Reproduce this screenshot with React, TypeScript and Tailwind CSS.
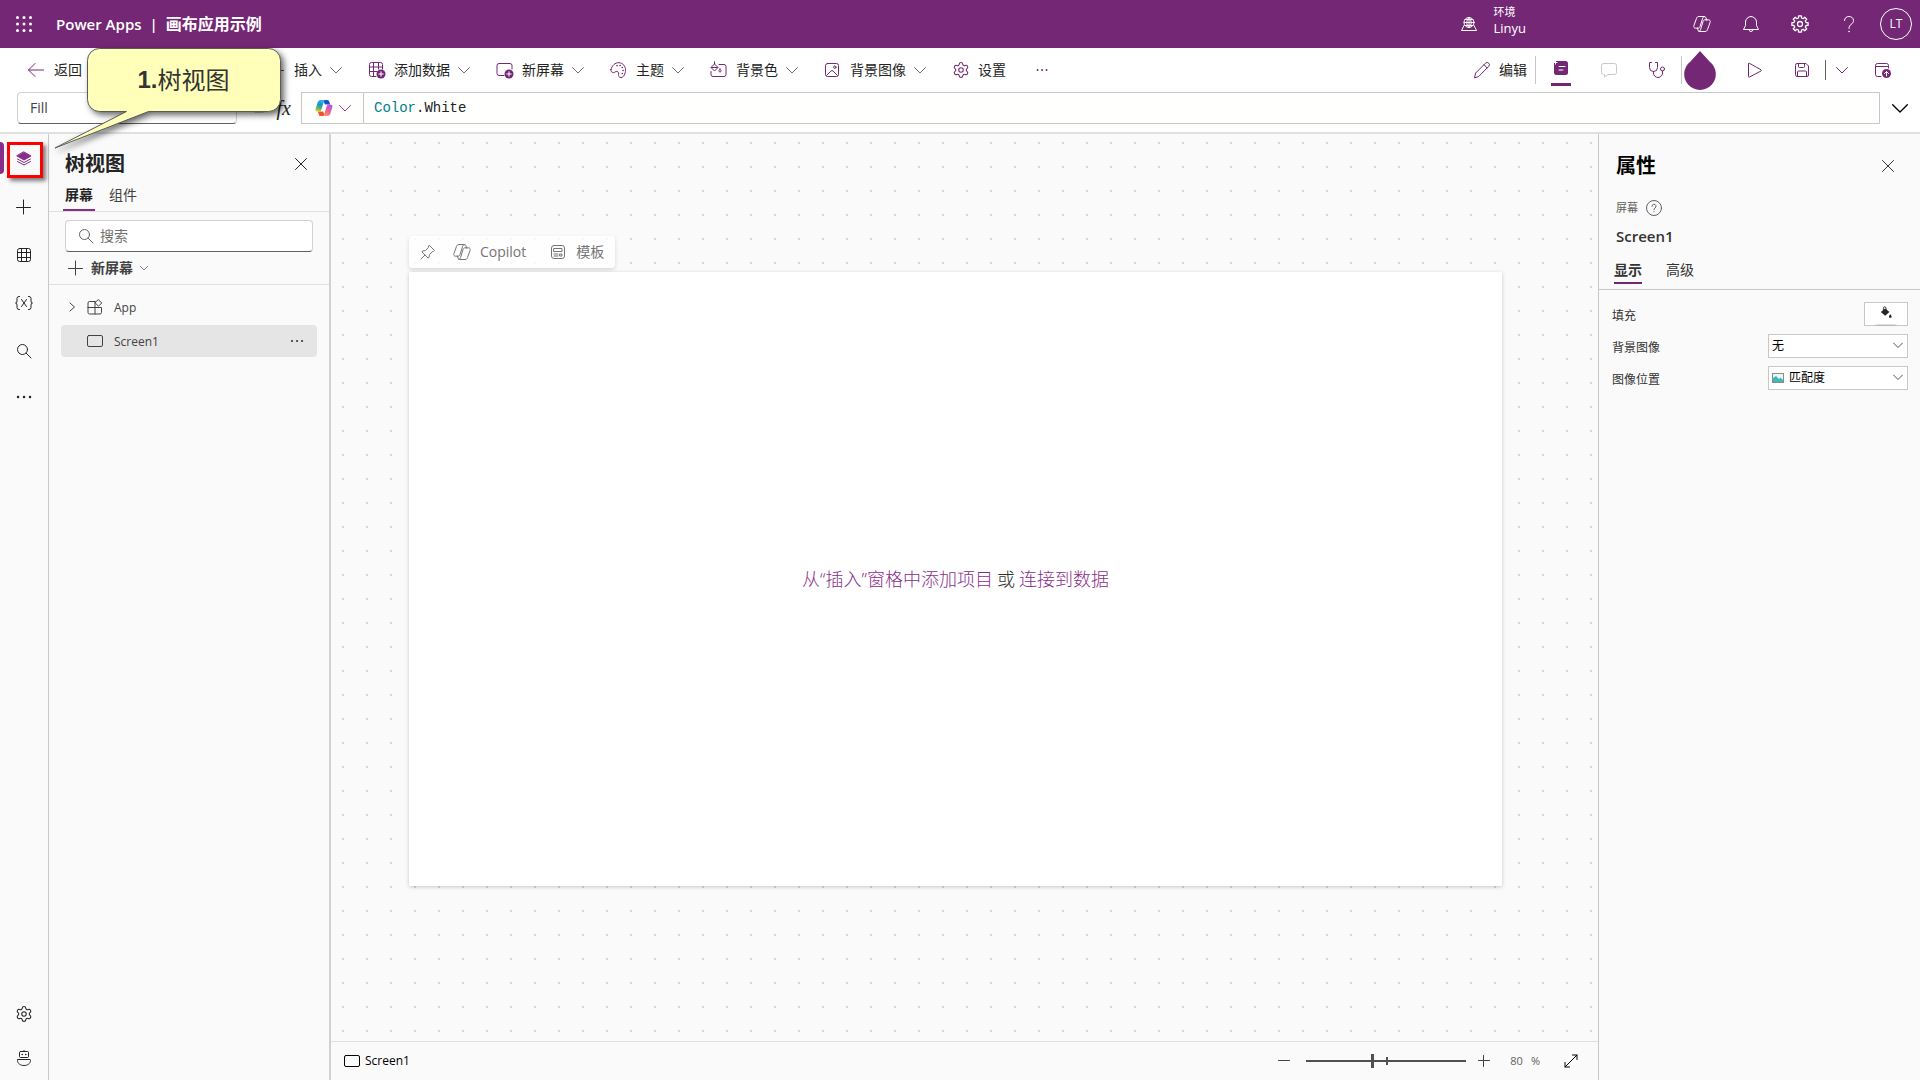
import { useId, useState, type ReactNode } from "react";
import { Settings } from "lucide-react";
import clsx from "clsx";

interface IconProps {
  children: ReactNode;
  className?: string;
  box?: string;
}

function Icon({ children, className = "size-5", box = "0 0 20 20" }: IconProps) {
  return (
    <svg
      viewBox={box}
      className={clsx("shrink-0", className)}
      fill="none"
      stroke="currentColor"
      strokeWidth={1}
      strokeLinecap="round"
      strokeLinejoin="round"
      aria-hidden="true"
    >
      {children}
    </svg>
  );
}

const ChevronDown = ({ className = "w-3 h-3" }: { className?: string }) => (
  <Icon className={className} box="0 0 12 12">
    <path d="M.5 3.5 6 9l5.5-5.5" />
  </Icon>
);

const CloseIcon = () => (
  <Icon className="size-3" box="0 0 12 12">
    <path d="m.5.5 11 11m0-11-11 11" />
  </Icon>
);

const PlusIcon = () => (
  <Icon className="size-4" box="0 0 16 16">
    <path d="M7.5 1v14M.5 8.5h14" />
  </Icon>
);

const SearchIcon = ({ className = "size-4" }: { className?: string }) => (
  <Icon className={className} box="0 0 16 16">
    <circle cx="6.5" cy="6.5" r="5" />
    <path d="m10.2 10.2 4.8 4.8" />
  </Icon>
);

const GridIcon = () => (
  <Icon className="size-4" box="0 0 16 16">
    <rect x="1.5" y="1.5" width="13" height="13" rx="2" />
    <path d="M5.5 1.5v13m5-13v13m-9-9h13m-13 5h13" />
  </Icon>
);

const CopilotOutline = () => (
  <Icon>
    <path d="M6.8 2.5h5.4c1 0 1.5.5 1.8 1.4l.7 2.3M6.8 2.5c-1.2 0-1.9.7-2.3 1.9L1.9 11.6c-.5 1.5.2 2.6 1.7 2.6h2.3M13.2 17.5H7.8c-1 0-1.5-.5-1.8-1.4l-.6-2M13.2 17.5c1.2 0 1.9-.7 2.3-1.9l2.6-7.2c.5-1.5-.2-2.6-1.7-2.6h-2.3" />
    <path d="M12.5 2.6c-1 .1-1.6.8-1.9 1.8L8 12.7c-.4 1-1 1.5-2 1.5M14.5 5.8H13c-1 0-1.6.6-1.9 1.5l-2.6 8.400c-.3 1-.8 1.600-1.600 1.700" />
  </Icon>
);

// Outline of a gear with eight teeth, centred on 10,10
const gearPath =
  Array.from({ length: 8 })
    .flatMap((_, i) =>
      [
        [-14, 6.2],
        [-10, 8.2],
        [10, 8.2],
        [14, 6.2],
      ].map(([offset, r]) => {
        const a = ((i * 45 + offset) * Math.PI) / 180;
        return `${(10 + r * Math.sin(a)).toFixed(2)} ${(10 - r * Math.cos(a)).toFixed(2)}`;
      }),
    )
    .reduce((d, p) => (d ? `${d}L${p}` : `M${p}`), "") + "Z";

function CopilotColor() {
  const id = useId();
  return (
    <svg viewBox="0 0 20 20" className="size-[18px]" aria-hidden="true">
      <defs>
        <linearGradient id={`${id}a`} x1=".5" y1="0" x2=".3" y2="1">
          <stop offset="0" stopColor="#2bb5ee" />
          <stop offset=".4" stopColor="#1f8fd6" />
          <stop offset=".7" stopColor="#52b85c" />
          <stop offset="1" stopColor="#e6d02a" />
        </linearGradient>
        <linearGradient id={`${id}b`} x1=".8" y1="0" x2=".2" y2="1">
          <stop offset="0" stopColor="#a65cf0" />
          <stop offset=".5" stopColor="#ee5a9a" />
          <stop offset="1" stopColor="#ff9a5c" />
        </linearGradient>
      </defs>
      <path d="M9 1h4.500c1.400 0 2 .8 2.300 1.900L16.800 6H11z" fill="#1c4fc4" />
      <path d="M11 19H6.500c-1.400 0-2-.8-2.300-1.900L3.200 14H9z" fill="#f0522e" />
      <path
        d="M6.500 1h4.800c-1 .5-1.300 1.300-1.700 2.500l-2.500 8.500c-.4 1.400-1.200 2-2.500 2H3.200C1 14 .2 12.700.7 11L3 3.500C3.600 1.800 4.800 1 6.500 1Z"
        fill={`url(#${id}a)`}
      />
      <path
        d="M13.500 19H8.700c1-.5 1.300-1.300 1.700-2.500L12.900 8c.4-1.400 1.200-2 2.500-2h1.400c2.200 0 3 1.300 2.500 3L17 16.500c-.6 1.700-1.800 2.500-3.500 2.500Z"
        fill={`url(#${id}b)`}
      />
      <path d="M11.200 6.500 8.800 13.500" stroke="#fff" strokeWidth="1.500" />
    </svg>
  );
}

const ScreenIcon = () => (
  <Icon className="w-4 h-4" box="0 0 16 16">
    <rect x=".5" y="2.5" width="15" height="11" rx="1.5" />
  </Icon>
);

const PlusBadge = () => (
  <>
    <circle cx="13" cy="13" r="4.5" fill="currentColor" stroke="none" />
    <path d="M13 10.800v4.400M10.800 13h4.400" stroke="#fff" />
  </>
);

interface Command {
  label: string;
  icon: ReactNode;
  menu: boolean;
}

const commands: Command[] = [
  { label: "插入", icon: <PlusIcon />, menu: true },
  {
    label: "添加数据",
    icon: (
      <Icon className="size-[18px]" box="0 0 18 18">
        <path d="M8 15.5H3.5a2 2 0 0 1-2-2v-10a2 2 0 0 1 2-2h9a2 2 0 0 1 2 2V8M1.5 6h13m-13 4.5H9M5.5 1.5v14m5-14V8" />
        <PlusBadge />
      </Icon>
    ),
    menu: true,
  },
  {
    label: "新屏幕",
    icon: (
      <Icon className="size-[18px]" box="0 0 18 18">
        <path d="M8 14.5H3a2 2 0 0 1-2-2v-8a2 2 0 0 1 2-2h11a2 2 0 0 1 2 2V8" />
        <PlusBadge />
      </Icon>
    ),
    menu: true,
  },
  {
    label: "主题",
    icon: (
      <Icon className="size-[18px]" box="0 0 18 18">
        <path d="M1 8.5C2 4.5 5 1.5 9 1.7c4 .3 6.600 3.600 6.500 7.500-.1 3.500-1.800 7.300-4.500 7.300-2.200 0-2.700-1.700-2.500-3.200.2-1.700-.3-2.700-1.600-2.900-1.500-.2-2 1.300-3.600 1.200C1.600 11.500.6 10.200 1 8.5Z" />
        <path d="M7 4.800h.1m3-.3h.1m2 2h.1m.7 3h.1m-.8 3h.1" strokeWidth="1.600" />
      </Icon>
    ),
    menu: true,
  },
  {
    label: "背景色",
    icon: (
      <Icon className="size-[18px]" box="0 0 18 18">
        <path d="M9 3.500h5a2 2 0 0 1 2 2v8a2 2 0 0 1-2 2H3a2 2 0 0 1-2-2V10.500" />
        <path d="M4.500 3 1 6.500l3.500 3.500L8 6.500 4.500 3V.8M1.500 6.500h6M10 8c-.8 1-1 1.500-1 2a1 1 0 0 0 2 0c0-.5-.3-1-1-2Z" />
      </Icon>
    ),
    menu: true,
  },
  {
    label: "背景图像",
    icon: (
      <Icon className="size-[18px]" box="0 0 18 18">
        <rect x="1.5" y="2.5" width="13" height="13" rx="2" />
        <circle cx="10.800" cy="6.200" r="1.200" />
        <path d="m2.500 14.500 4.500-4.500q1-1 2 0l4.500 4.500" />
      </Icon>
    ),
    menu: true,
  },
  { label: "设置", icon: <Settings className="size-[18px]" strokeWidth={1.4} />, menu: false },
];

function Header() {
  return (
    <header className="flex h-12 shrink-0 items-center bg-[#742774] pl-4 pr-2 text-white">
      <button aria-label="应用启动器" className="flex size-4 items-center justify-center">
        <svg viewBox="0 0 16 16" className="size-4" fill="currentColor">
          {[1.5, 8, 14.5].map((y) => [1.5, 8, 14.5].map((x) => <circle key={`${x}-${y}`} cx={x} cy={y} r="1.5" />))}
        </svg>
      </button>
      <h1 className="ml-6 flex items-center gap-2 text-[15px] font-semibold">
        <span>Power Apps</span>
        <span>|</span>
        <span className="text-base">画布应用示例</span>
      </h1>
      <div className="ml-auto flex items-center gap-4">
        <Icon className="size-4" box="0 0 16 16">
          <circle cx="8" cy="6.500" r="5" />
          <path d="M8 1.500v10m-5-5h10m-9-3h8m-8 6h8M8 1.500c-3 3-3 7 0 10 3-3 3-7 0-10M3 9.500.5 14.500h15L13 9.500" />
        </Icon>
        <div className="flex flex-col pb-2">
          <span className="text-[11px] leading-4">环境</span>
          <span className="text-[13px] leading-4">Linyu</span>
        </div>
      </div>
      <div className="ml-[166px] flex items-center gap-[29px]">
        <button aria-label="Copilot">
          <CopilotOutline />
        </button>
        <button aria-label="通知">
          <Icon>
            <path d="M10 2.500a5.500 5.500 0 0 0-5.500 5.500v3.500l-2 4h15l-2-4V8A5.500 5.500 0 0 0 10 2.500ZM8 15.500a2 2 0 0 0 4 0" />
          </Icon>
        </button>
        <button aria-label="设置">
          <Icon>
            <path d={gearPath} strokeWidth="1.300" />
            <circle cx="10" cy="10" r="2.500" strokeWidth="1.300" />
          </Icon>
        </button>
        <button aria-label="帮助">
          <Icon>
            <path d="M5.500 6.500c0-2.500 2-4 4.500-4s4.500 1.600 4.500 4c0 2-1.200 2.900-2.500 4-1.300 1-2 1.800-2 4" />
            <path d="M10 17.500h.1" strokeWidth="1.600" />
          </Icon>
        </button>
      </div>
      <button className="ml-[21px] flex size-8 items-center justify-center rounded-full border border-white text-xs">LT</button>
    </header>
  );
}

function CommandBar() {
  return (
    <div className="flex h-11 shrink-0 items-center bg-white pl-7 pr-7 text-sm text-[#242424]">
      <button className="mr-[186px] flex shrink-0 items-center gap-2">
        <Icon className="size-[18px] text-[#742774]" box="0 0 18 18">
          <path d="M15.500 9H.5m6.500-6.500L.5 9l6.500 6.500" />
        </Icon>
        返回
      </button>
      <div className="flex items-center gap-[26px] whitespace-nowrap">
        {commands.map((c) => (
          <button key={c.label} className="flex items-center gap-2">
            <span className="flex w-[18px] justify-center text-[#742774]">{c.icon}</span>
            {c.label}
            {c.menu && (
              <span className="text-[#707070]">
                <ChevronDown />
              </span>
            )}
          </button>
        ))}
        <button aria-label="更多" className="flex size-5 items-center justify-center text-[#742774]">
          <Icon className="size-3" box="0 0 12 12">
            <path d="M1.500 6h.1m4.400 0h.1m4.400 0h.1" strokeWidth="1.800" />
          </Icon>
        </button>
      </div>

      <div className="ml-auto flex items-center text-[#742774]">
        <button className="flex items-center gap-2">
          <Icon className="size-[18px]" box="0 0 18 18">
            <path d="m1.500 16.500 1.200-4.500L12.500 2.200a2.200 2.200 0 0 1 3.200 3.200L6 15.200ZM11 3.700 14.200 7" />
          </Icon>
          <span className="text-[#242424]">编辑</span>
        </button>
        <span className="mx-2 h-7 w-px bg-[#c8c8c8]" />
        <div className="ml-[7px] flex items-center gap-7">
          <button aria-label="注释" className="flex h-8 w-5 flex-col items-center border-b-3 border-[#742774] pt-[6px]">
            <svg viewBox="0 0 16 16" className="size-4">
              <rect x="1" y="1" width="14" height="14" rx="2.500" fill="currentColor" />
              <path d="M6 6.500h6m-6 3.500h4" stroke="#fff" strokeLinecap="round" />
              <path d="M2.500.5v4m-2-2h4" stroke="#fff" />
            </svg>
          </button>
          <button aria-label="批注" className="text-[#c8c8c8]">
            <Icon>
              <path d="M4.500 3.500h11a2 2 0 0 1 2 2v7a2 2 0 0 1-2 2H9L5.500 17.200v-2.700h-1a2 2 0 0 1-2-2v-7a2 2 0 0 1 2-2Z" />
            </Icon>
          </button>
          <button aria-label="应用检查器">
            <Icon>
              <path d="M4.500 2.500H2.500v5a4 4 0 0 0 8 0v-5h-2M6.500 11.500v1.500a4.500 4.500 0 0 0 9 0V11" />
              <circle cx="15.500" cy="9" r="2" />
            </Icon>
          </button>
        </div>
        <span className="ml-[14px] h-7 w-px bg-[#c8c8c8]" />
        <Icon className="ml-0.5 h-10 w-8" box="0 0 32 40">
          <path d="M16 1 25.500 11.500A15.800 15.800 0 1 1 6.500 11.500Z" fill="currentColor" stroke="none" />
        </Icon>
        <div className="ml-7 flex items-center gap-7">
          <button aria-label="预览">
            <Icon>
              <path d="M4.500 4v12.500q0 1 1 .5L17 11q.8-.6 0-1.200L5.500 3.300q-1-.5-1 .7Z" />
            </Icon>
          </button>
          <button aria-label="保存">
            <Icon>
              <path d="M3.500 5a1.500 1.500 0 0 1 1.500-1.500h9L16.500 6v9a1.500 1.500 0 0 1-1.500 1.500H5A1.500 1.500 0 0 1 3.500 15ZM6.500 3.500v3a1 1 0 0 0 1 1h4a1 1 0 0 0 1-1v-3M5.500 16.500V12a1 1 0 0 1 1-1h7a1 1 0 0 1 1 1v4.500" />
            </Icon>
          </button>
        </div>
        <span className="ml-[13px] h-5 w-px bg-[#616161]" />
        <button aria-label="保存选项" className="ml-[10px]">
          <ChevronDown />
        </button>
        <button aria-label="发布" className="ml-[26px]">
          <Icon className="size-[18px]" box="0 0 18 18">
            <path d="M7 15.500H3.500a2 2 0 0 1-2-2v-9a2 2 0 0 1 2-2h9a2 2 0 0 1 2 2V7M1.500 5.500h13" />
            <circle cx="12.500" cy="12.500" r="4.500" fill="currentColor" stroke="none" />
            <path d="M12.500 15v-4.500m-2 2 2-2 2 2" stroke="#fff" />
          </Icon>
        </button>
      </div>
    </div>
  );
}

function FormulaBar() {
  const [formula, setFormula] = useState("Color.White");
  const [head, ...rest] = formula.split(".");

  return (
    <div className="flex h-[42px] shrink-0 items-start border-b-2 border-[#e0e0e0] bg-white pl-[17px]">
      <select
        aria-label="属性"
        className="h-8 w-[220px] appearance-none rounded border border-[#d1d1d1] border-b-[#616161] bg-white px-3 text-sm text-[#424242]"
      >
        <option>Fill</option>
      </select>
      <span className="flex h-8 w-16 items-center justify-end gap-3 pr-[10px] text-[#242424]">
        <span className="pt-1 text-xl">=</span>
        <span className="font-['Liberation_Serif',serif] text-xl italic">fx</span>
      </span>
      <div className="flex h-8 flex-1 border border-[#c8c8c8] bg-[#fffffe]">
        <button aria-label="Copilot" className="flex w-[62px] items-center justify-center gap-[6px] border-r border-[#c8c8c8] text-[#9b3f9b]">
          <CopilotColor />
          <ChevronDown />
        </button>
        <div className="relative flex-1 font-['Liberation_Mono',monospace] text-sm">
          <div aria-hidden="true" className="px-[10px] leading-[30px] text-[#242424]">
            <span className="text-[#007f8b]">{head}</span>
            {rest.length > 0 && `.${rest.join(".")}`}
          </div>
          <input
            aria-label="公式"
            value={formula}
            onChange={(e) => setFormula(e.target.value)}
            className="absolute inset-0 w-full bg-transparent px-[10px] text-transparent caret-black outline-none"
          />
        </div>
      </div>
      <button aria-label="展开编辑栏" className="flex h-8 w-10 items-center justify-center text-black">
        <ChevronDown className="size-4" />
      </button>
    </div>
  );
}

function Rail() {
  const button = "flex h-12 w-full items-center justify-center";
  return (
    <nav className="flex w-[49px] shrink-0 flex-col border-r border-[#c8c8c8] pt-px pb-0.5 text-[#242424]">
      <button aria-label="树视图" className={clsx(button, "relative text-[#8a2d8a]")}>
        <span className="absolute top-[7px] left-0 h-8 w-1 rounded-r bg-[#8a2d8a]" />
        <Icon className="size-4" box="0 0 16 16">
          <path d="M8 1 15 5 8 9 1 5Z" fill="currentColor" />
          <path d="m1.500 8 6.500 3.500L14.500 8m-13 2.500L8 14l6.500-3.500" />
        </Icon>
        <span className="absolute top-[7px] left-[7px] size-9 border-3 border-[#ff0000] shadow-[3px_3px_4px_rgba(0,0,0,0.5)]" />
      </button>
      <button aria-label="插入" className={button}>
        <PlusIcon />
      </button>
      <button aria-label="数据" className={button}>
        <GridIcon />
      </button>
      <button aria-label="变量" className={button}>
        <Icon className="h-4 w-[18px]" box="0 0 18 16">
          <path d="M4.500 1.500H4a2 2 0 0 0-2 2V6q0 2-1.500 2Q2 8 2 10v2.500a2 2 0 0 0 2 2h.5m9-13h.5a2 2 0 0 1 2 2V6q0 2 1.500 2Q16 8 16 10v2.500a2 2 0 0 1-2 2h-.5M6.500 4.500l5 7m0-7-5 7" />
        </Icon>
      </button>
      <button aria-label="搜索" className={button}>
        <SearchIcon />
      </button>
      <button aria-label="更多" className="flex h-11 w-full items-center justify-center">
        <Icon className="size-4" box="0 0 16 16">
          <path d="M2 8h.1m5.900 0h.1m5.900 0h.1" strokeWidth="2.400" />
        </Icon>
      </button>
      <button aria-label="设置" className={clsx(button, "mt-auto")}>
        <Settings className="size-[18px]" strokeWidth={1.4} />
      </button>
      <button aria-label="虚拟代理" className="flex h-10 w-full items-center justify-center">
        <Icon className="size-4" box="0 0 16 16">
          <path d="M8 .5v1" />
          <rect x="3.500" y="1.500" width="9" height="6" rx="1" />
          <path d="M6.200 4.500h.1m3.400 0h.1" strokeWidth="1.600" />
          <path d="M2 9.500h12q.5 0 .5 1c0 3-3 5-6.500 5s-6.500-2-6.500-5q0-1 .5-1Z" />
        </Icon>
      </button>
    </nav>
  );
}

function TreePanel() {
  return (
    <aside className="flex w-[282px] shrink-0 flex-col border-r-2 border-[#d1d1d1] text-[#242424]">
      <div className="flex h-[46px] items-end justify-between pr-[22px] pl-4">
        <h2 className="text-xl leading-8 font-bold">树视图</h2>
        <button aria-label="关闭" className="flex h-8 items-center">
          <CloseIcon />
        </button>
      </div>
      <div role="tablist" className="flex h-8 border-b border-[#e0e0e0] pl-[14px] text-sm">
        <button role="tab" aria-selected="true" className="w-8 border-b-2 border-[#8a2d8a] font-semibold">
          屏幕
        </button>
        <button role="tab" aria-selected="false" className="ml-[14px] border-b-2 border-transparent text-[#424242]">
          组件
        </button>
      </div>
      <label className="mx-4 mt-2 flex h-8 items-center gap-[6px] rounded border border-[#d1d1d1] border-b-[#616161] bg-white px-3 text-[#616161]">
        <SearchIcon />
        <input aria-label="搜索" placeholder="搜索" className="min-w-0 flex-1 text-sm outline-none placeholder:text-[#707070]" />
      </label>
      <div className="flex h-[33px] items-center border-b border-[#e0e0e0] pl-[19px]">
        <button className="flex items-center gap-[7px] text-sm font-semibold text-[#424242]">
          <PlusIcon />
          新屏幕
          <ChevronDown className="size-2" />
        </button>
      </div>
      <ul className="flex flex-col gap-0.5 py-[6px] pr-3 pl-3 text-xs text-[#424242]">
        <li className="flex h-8 items-center rounded pl-[6px]">
          <Icon className="mr-2 size-3" box="0 0 12 12">
            <path d="m3 2 4.500 4L3 10" />
          </Icon>
          <Icon className="size-4" box="0 0 16 16">
            <path d="M8 2.500H2.500a1.500 1.500 0 0 0-1.500 1.500v9.500A1.500 1.500 0 0 0 2.500 15H13a1.500 1.500 0 0 0 1.500-1.500V8.500H1m7-6V15M11.500.8l3.200 3.200-3.200 3.200L8.300 4Z" />
          </Icon>
          <span className="ml-[11px] pt-0.5">App</span>
        </li>
        <li className="flex h-8 items-center rounded bg-[#e5e5e5] pr-3 pl-[26px]">
          <ScreenIcon />
          <span className="ml-[11px] pt-0.5">Screen1</span>
          <button aria-label="更多操作" className="ml-auto">
            <Icon className="size-4" box="0 0 16 16">
              <path d="M3 8h.1m4.900 0h.1m4.900 0h.1" strokeWidth="2.200" />
            </Icon>
          </button>
        </li>
      </ul>
    </aside>
  );
}

function Workspace() {
  const [zoom, setZoom] = useState(80);

  return (
    <main className="flex min-w-0 flex-1 flex-col">
      <div className="flex-1 bg-[radial-gradient(circle,#d6d6d6_1px,transparent_1px)] bg-[length:24px_24px] bg-[position:0px_-3px] pt-[102px] pr-24 pl-[78px]">
        <div className="flex h-8 w-max items-center rounded bg-white/80 px-[11px] text-sm text-[#757575] shadow-[0_2px_4px_rgba(0,0,0,0.14)]">
          <button aria-label="固定" className="mr-4">
            <Icon className="size-4" box="0 0 16 16">
              <path d="m9.500 1.500 5 5-1 1-1.200.2-2.800 2.800-.5 3-1 .5-6-6 .5-1 3-.5 2.800-2.800.2-1.200ZM5 11l-4 4" />
            </Icon>
          </button>
          <button className="flex items-center gap-2">
            <CopilotOutline />
            Copilot
          </button>
          <button className="ml-6 flex items-center gap-[10px]">
            <Icon className="size-4" box="0 0 16 16">
              <rect x="1.500" y="1.500" width="13" height="13" rx="2.500" />
              <path d="M4 4.500h8v3H4Zm0 5.500h4m-4 2h4m2-2h2v2h-2Z" />
            </Icon>
            模板
          </button>
        </div>
        <div className="mt-1 flex aspect-[1093/614] w-full items-center justify-center bg-white text-lg font-light shadow-[0_1px_4px_rgba(0,0,0,0.2)]">
          <p className="flex gap-1 text-[#333333]">
            <a href="#insert" className="text-[#8a2d8a]">
              从“插入”窗格中添加项目
            </a>
            或
            <a href="#data" className="text-[#8a2d8a]">
              连接到数据
            </a>
          </p>
        </div>
      </div>

      <footer className="flex h-[39px] shrink-0 items-center border-t border-[#e0e0e0] pr-5 pl-[13px] text-xs text-black">
        <button className="flex items-center gap-[5px]">
          <ScreenIcon />
          Screen1
        </button>
        <div className="ml-auto flex items-center text-[#424242]">
          <button aria-label="缩小" onClick={() => setZoom(zoom - 10)}>
            <Icon className="size-3" box="0 0 12 12">
              <path d="M.5 5.500h11" />
            </Icon>
          </button>
          <div className="relative mr-3 ml-4 flex h-4 w-40 items-center">
            <input
              type="range"
              aria-label="缩放"
              min={10}
              max={180}
              value={zoom}
              onChange={(e) => setZoom(Number(e.target.value))}
              className="h-4 w-full appearance-none bg-transparent [&::-webkit-slider-runnable-track]:h-0.5 [&::-webkit-slider-runnable-track]:bg-[#505050] [&::-webkit-slider-thumb]:-mt-[6px] [&::-webkit-slider-thumb]:h-[14px] [&::-webkit-slider-thumb]:w-[3px] [&::-webkit-slider-thumb]:appearance-none [&::-webkit-slider-thumb]:bg-[#505050]"
            />
            <span className="pointer-events-none absolute left-1/2 h-2 w-0.5 bg-[#505050]" />
          </div>
          <button aria-label="放大" onClick={() => setZoom(zoom + 10)}>
            <Icon className="size-3" box="0 0 12 12">
              <path d="M5.500.5v11M.5 5.500h11" />
            </Icon>
          </button>
          <span className="ml-5 flex gap-2 text-[11px] text-[#616161]">
            <span>{zoom}</span>
            <span>%</span>
          </span>
          <button aria-label="适应窗口" className="ml-6 text-black">
            <Icon className="size-[14px]" box="0 0 14 14">
              <path d="m1 13 12-12M8.500 1H13v4.500M1 8.500V13h4.500" />
            </Icon>
          </button>
        </div>
      </footer>
    </main>
  );
}

function PropertiesPanel() {
  const select = "h-6 w-full appearance-none border border-[#c8c8c8] bg-white text-xs text-black";
  return (
    <aside className="w-[322px] shrink-0 border-l border-[#c8c8c8] text-[#333333]">
      <div className="flex h-12 items-end justify-between pr-[26px] pl-[17px]">
        <h2 className="text-xl leading-8 font-bold text-black">属性</h2>
        <button aria-label="关闭" className="flex h-8 items-center">
          <CloseIcon />
        </button>
      </div>
      <div className="mt-4 flex h-5 items-center gap-2 pl-[17px] text-[11px] text-[#616161]">
        屏幕
        <Icon className="size-4" box="0 0 16 16">
          <circle cx="8" cy="8" r="7.500" />
          <path d="M6 6.300a2 2 0 1 1 3 1.700q-1 .6-1 1.700M8 11.700h.1" />
        </Icon>
      </div>
      <h3 className="mt-[6px] pl-[17px] text-[15px] leading-6 font-semibold">Screen1</h3>
      <div role="tablist" className="mt-[10px] flex h-8 items-start gap-6 border-b border-[#c8c8c8] pl-[15px] text-sm">
        <button role="tab" aria-selected="true" className="h-[26px] border-b-2 border-[#742774] font-semibold">
          显示
        </button>
        <button role="tab" aria-selected="false" className="h-[26px] border-b-2 border-transparent">
          高级
        </button>
      </div>
      <div className="mt-3 flex flex-col gap-2 pr-3 pl-[13px] text-xs">
        <div className="flex h-6 items-center justify-between">
          <span className="pt-[3px]">填充</span>
          <button aria-label="填充颜色" className="flex h-6 w-11 items-center justify-center border border-[#c8c8c8] bg-white text-[#242424]">
            <span className="flex h-5 w-[22px] justify-center shadow-[0_2px_2px_-1px_rgba(0,0,0,0.2)]">
              <svg viewBox="0 0 14 14" className="mt-0.5 size-3" fill="currentColor">
                <path d="M1 7 6 3l5 4-5 4.500ZM10.500 13a1.800 1.800 0 0 0 3 0c.3-1-.7-2.500-1.500-3.300-.8.8-1.800 2.300-1.500 3.300Z" />
                <path d="M4 5V2.500a1.500 1.500 0 0 1 3 0V6" fill="none" stroke="currentColor" />
              </svg>
            </span>
          </button>
        </div>
        <div className="flex h-6 items-center justify-between">
          <label htmlFor="bg-image" className="pt-[3px]">
            背景图像
          </label>
          <div className="relative w-[140px]">
            <select id="bg-image" className={clsx(select, "pl-[3px]")}>
              <option>无</option>
            </select>
            <ChevronDown className="pointer-events-none absolute top-[6px] right-[5px] size-[10px]" />
          </div>
        </div>
        <div className="flex h-6 items-center justify-between">
          <label htmlFor="image-position" className="pt-[3px]">
            图像位置
          </label>
          <div className="relative w-[140px]">
            <svg viewBox="0 0 12 10" className="pointer-events-none absolute top-[7px] left-1 h-[10px] w-3">
              <rect x=".5" y=".5" width="11" height="9" fill="#e8f8f8" stroke="#8a8a8a" />
              <path d="M1 9V5l3-2 3 3 1.500-1.500L11 7v2Z" fill="#3fb8b8" />
            </svg>
            <select id="image-position" className={clsx(select, "pl-5")}>
              <option>匹配度</option>
            </select>
            <ChevronDown className="pointer-events-none absolute top-[6px] right-[5px] size-[10px]" />
          </div>
        </div>
      </div>
    </aside>
  );
}

function Callout() {
  return (
    <div className="absolute top-12 left-[54px] z-20 h-[104px] w-[232px]">
      <svg viewBox="0 0 232 104" className="size-full drop-shadow-[3px_3px_3px_rgba(0,0,0,0.6)]">
        <path
          d="M45.500.5h169a12 12 0 0 1 12 12v39a12 12 0 0 1-12 12H94.500L1 100 72.500 63.500h-27a12 12 0 0 1-12-12v-39a12 12 0 0 1 12-12Z"
          fill="#ffffb9"
          stroke="#5a5a5a"
        />
      </svg>
      <p className="absolute top-0 left-[33px] flex h-16 w-[193px] items-center justify-center text-2xl text-[#333333]">
        <span className="font-['Liberation_Sans',sans-serif] font-bold">1.</span>
        树视图
      </p>
    </div>
  );
}

export default function App() {
  return (
    <div className="relative flex min-h-screen flex-col bg-[#fafafa] font-['Open_Sans','Noto_Sans_CJK_SC',sans-serif]">
      <Header />
      <CommandBar />
      <FormulaBar />
      <div className="flex flex-1">
        <Rail />
        <TreePanel />
        <Workspace />
        <PropertiesPanel />
      </div>
      <Callout />
    </div>
  );
}
